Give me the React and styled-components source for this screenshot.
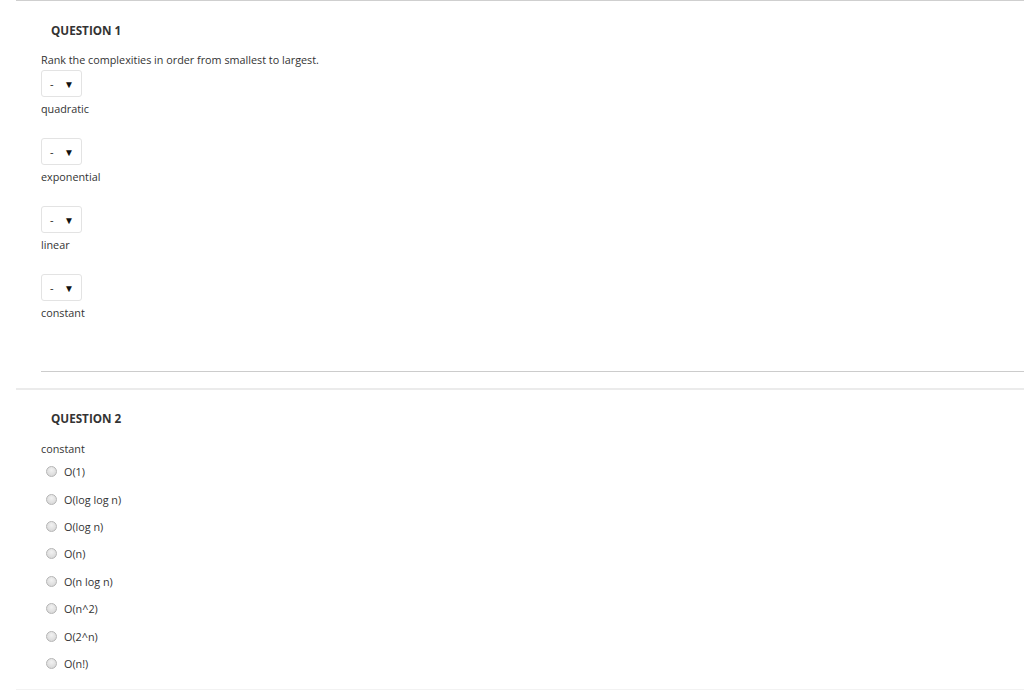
import React from "react";
import styled, { createGlobalStyle } from "styled-components";

const GlobalStyle = createGlobalStyle`
  html, body {
    margin: 0;
    padding: 0;
    background: #ffffff;
  }
  body {
    font-family: "Open Sans", "Liberation Sans", sans-serif;
    color: #333333;
  }
`;

const rankItems = ["quadratic", "exponential", "linear", "constant"];
const choices = [
  "O(1)",
  "O(log log n)",
  "O(log n)",
  "O(n)",
  "O(n log n)",
  "O(n^2)",
  "O(2^n)",
  "O(n!)",
];

const Page = styled.div`
  padding-left: 16px;
  width: 1008px;
`;

const QuestionBlock = styled.div`
  border-top: ${(p) => (p.$first ? "1px solid #cfcfcf" : "2px solid #ebebeb")};
  border-bottom: ${(p) => (p.$last ? "1px solid #f2f2f2" : "none")};
  padding-top: ${(p) => (p.$first ? "21px" : "20px")};
  padding-bottom: ${(p) => (p.$first ? "16px" : "0")};
`;

const Title = styled.h3`
  margin: 0 0 0 35px;
  font-size: 11.7px;
  line-height: 16px;
  font-weight: 700;
  color: #333333;
`;

const Body = styled.div`
  margin-left: 25px;
  padding-top: ${(p) => p.$pt};
  padding-bottom: ${(p) => p.$pb};
  border-bottom: ${(p) => (p.$rule ? "1px solid #cccccc" : "none")};
`;

const Text = styled.div`
  font-size: 10.8px;
  line-height: 15px;
  color: #333333;
`;

const Prompt = styled(Text)`
  margin-bottom: 3px;
`;

const RankItem = styled.div`
  display: flex;
  flex-direction: column;
  align-items: flex-start;
  gap: 4px;
  margin-bottom: ${(p) => (p.$last ? "0" : "22px")};
`;

const Select = styled.div`
  box-sizing: border-box;
  width: 41px;
  height: 27px;
  border: 1px solid #e3e3e3;
  border-radius: 3px;
  background: #ffffff;
  display: flex;
  align-items: center;
  justify-content: space-between;
  padding: 0 7px 0 8px;
  font-size: 11px;
  color: #222222;
`;

const Arrow = styled.span`
  font-size: 10px;
  line-height: 1;
  color: #111111;
`;

const ChoiceList = styled.div`
  display: flex;
  flex-direction: column;
  margin-top: 2px;
`;

const Choice = styled.label`
  display: flex;
  align-items: center;
  height: 27.4px;
  padding-left: 5px;
  gap: 7px;
  font-size: 10.8px;
  color: #333333;
`;

const Radio = styled.span`
  box-sizing: border-box;
  width: 11px;
  height: 11px;
  border-radius: 50%;
  border: 1px solid #b5b5b5;
  background: radial-gradient(circle at 50% 35%, #f2f2f2 0%, #dcdcdc 70%, #cdcdcd 100%);
`;

export default function App() {
  return (
    <>
      <GlobalStyle />
      <Page>
        <QuestionBlock $first>
          <Title>QUESTION 1</Title>
          <Body $pt="14px" $pb="51px" $rule>
            <Prompt>Rank the complexities in order from smallest to largest.</Prompt>
            {rankItems.map((item, i) => (
              <RankItem key={item} $last={i === rankItems.length - 1}>
                <Select>
                  <span>-</span>
                  <Arrow>▼</Arrow>
                </Select>
                <Text>{item}</Text>
              </RankItem>
            ))}
          </Body>
        </QuestionBlock>
        <QuestionBlock $last>
          <Title>QUESTION 2</Title>
          <Body $pt="15px" $pb="12px">
            <Text>constant</Text>
            <ChoiceList>
              {choices.map((c) => (
                <Choice key={c}>
                  <Radio />
                  {c}
                </Choice>
              ))}
            </ChoiceList>
          </Body>
        </QuestionBlock>
      </Page>
    </>
  );
}
